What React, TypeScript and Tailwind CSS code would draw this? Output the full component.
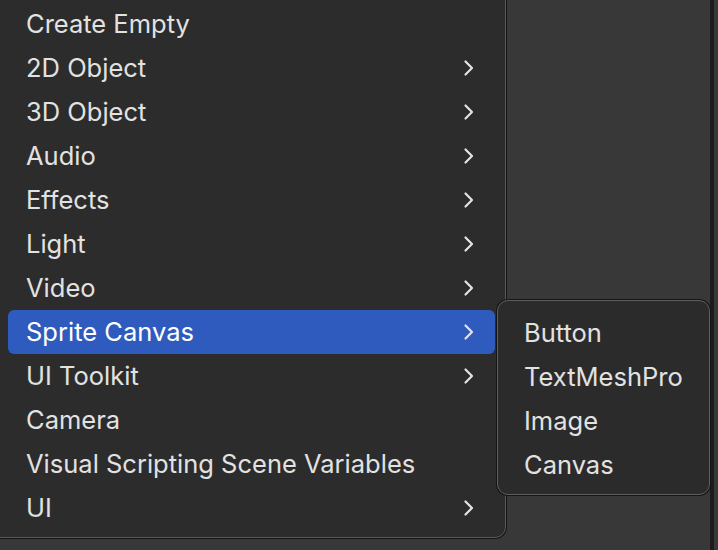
import React from "react";

const Chevron = () => (
  <svg width="12" height="18" viewBox="0 0 12 18" fill="none" className="shrink-0">
    <path d="M2.5 2.5 L9 9 L2.5 15.5" stroke="#e4e4e4" strokeWidth="2.2" strokeLinecap="round" strokeLinejoin="round" />
  </svg>
);

const items: { label: string; sub?: boolean; active?: boolean }[] = [
  { label: "Create Empty" },
  { label: "2D Object", sub: true },
  { label: "3D Object", sub: true },
  { label: "Audio", sub: true },
  { label: "Effects", sub: true },
  { label: "Light", sub: true },
  { label: "Video", sub: true },
  { label: "Sprite Canvas", sub: true, active: true },
  { label: "UI Toolkit", sub: true },
  { label: "Camera" },
  { label: "Visual Scripting Scene Variables" },
  { label: "UI", sub: true },
];

const subItems = ["Button", "TextMeshPro", "Image", "Canvas"];

export default function App() {
  return (
    <div
      className="relative w-[718px] h-[550px] overflow-hidden bg-[#383838] flex"
      style={{ fontFamily: "Inter, 'Noto Sans', sans-serif" }}
    >
      <div className="ml-auto w-[4px] h-full bg-[#1c1c1c] mr-[4px]" />
      <div
        className="absolute left-[-20px] top-[-10px] w-[526px] rounded-[11px] border border-[#5a5a5a] bg-[#2c2c2c] shadow-[0_0_0_1px_#151515] pt-[11px] pb-[7px] pl-[27px] pr-[10px] flex flex-col"
      >
        {items.map((it) => (
          <div
            key={it.label}
            className={`h-[44px] flex items-center justify-between pl-[18px] pr-[20px] rounded-[6px] text-[25.5px] ${
              it.active ? "bg-[#2f5bbf] text-white" : "text-[#e2e2e2]"
            }`}
          >
            <span>{it.label}</span>
            {it.sub && <Chevron />}
          </div>
        ))}
      </div>
      <div className="absolute left-[497px] top-[300px] w-[213px] rounded-[11px] border border-[#5e5e5e] bg-[#2b2b2b] shadow-[0_0_0_1px_#151515] pt-[10px] pb-[7px] pl-[26px] flex flex-col">
        {subItems.map((s) => (
          <div key={s} className="h-[44px] flex items-center text-[25.5px] text-[#e2e2e2]">
            {s}
          </div>
        ))}
      </div>
    </div>
  );
}
